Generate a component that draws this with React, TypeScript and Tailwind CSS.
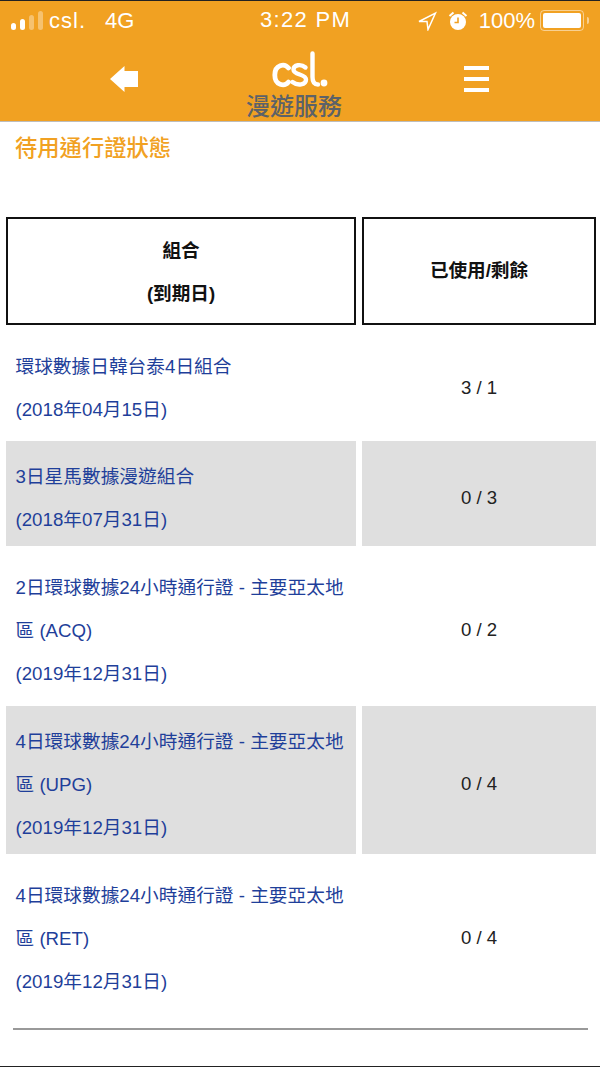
const cjk = "font-['Liberation_Sans','Noto_Sans_CJK_TC',sans-serif]";

const rows: { lines: string[]; usage: string; shaded: boolean; pad: string }[] = [
  { lines: ["環球數據日韓台泰4日組合", "(2018年04月15日)"], usage: "3 / 1", shaded: false, pad: "pb-[3.4px]" },
  { lines: ["3日星馬數據漫遊組合", "(2018年07月31日)"], usage: "0 / 3", shaded: true, pad: "pb-[4.4px]" },
  { lines: ["2日環球數據24小時通行證 - 主要亞太地", "區 (ACQ)", "(2019年12月31日)"], usage: "0 / 2", shaded: false, pad: "pb-[4.4px]" },
  { lines: ["4日環球數據24小時通行證 - 主要亞太地", "區 (UPG)", "(2019年12月31日)"], usage: "0 / 4", shaded: true, pad: "pb-[4.4px]" },
  { lines: ["4日環球數據24小時通行證 - 主要亞太地", "區 (RET)", "(2019年12月31日)"], usage: "0 / 4", shaded: false, pad: "pb-[4.4px]" },
];

function StatusBar() {
  return (
    <div className="flex h-[39px] items-center pl-[11px] pr-[11px] text-[22px] text-white">
      <div className="flex w-[249px] items-center">
        <svg width="32" height="20" viewBox="0 0 32 20" fill="#fff">
          <rect x="0" y="12" width="5" height="7" rx="2.5" />
          <rect x="9" y="8" width="5" height="11" rx="2.5" />
          <rect x="18" y="4" width="5" height="15" rx="2.5" opacity="0.35" />
          <rect x="27" y="0" width="5" height="19" rx="2.5" opacity="0.35" />
        </svg>
        <span className="ml-[6px] tracking-[1px]">csl.</span>
        <span className="ml-[19px]">4G</span>
      </div>
      <div className="-mt-[2px] font-medium tracking-[1.3px] whitespace-nowrap">3:22 PM</div>
      <div className="flex flex-1 items-center justify-end">
        <svg width="19" height="20" viewBox="0 0 19 20" fill="none" stroke="#fff" strokeWidth="1.5" strokeLinejoin="miter">
          <path d="M1 10.5 L17.5 2 L10 18.5 L9 10.5 Z" />
        </svg>
        <svg className="ml-[11px]" width="20" height="20" viewBox="0 0 19 20" fill="#fff">
          <circle cx="9.5" cy="11" r="8" />
          <path d="M9.5 6.5 V11.5 H6" stroke="#f1a122" strokeWidth="1.6" fill="none" />
          <path d="M1 5 L5 1.5 M18 5 L14 1.5" stroke="#fff" strokeWidth="2" />
        </svg>
        <span className="ml-[11px] font-light">100%</span>
        <div className="ml-[5px] flex h-[21px] w-[44px] items-center rounded-[4px] border border-white/50 p-[2px]">
          <div className="h-full w-full rounded-[2px] bg-white" />
        </div>
        <div className="ml-[3px] h-[7px] w-[2px] rounded-r-sm bg-white/50" />
      </div>
    </div>
  );
}

function Header() {
  return (
    <div className="flex h-[81px] items-start pl-[110px]">
      <svg className="mt-[26px]" width="29" height="27" viewBox="0 0 29 27" fill="#fff">
        <path d="M0 13 L14.5 0 V5 H28 V21 H14.5 V26 Z" />
      </svg>
      <div className="ml-[105px] flex w-[100px] flex-col">
        <svg className="mt-[10px] ml-[26px]" width="60" height="38" viewBox="0 0 60 38" fill="none" stroke="#fff" strokeLinecap="round">
          <path d="M18.5 18 C14.5 13 4.8 14.5 4.8 25 C4.8 35.5 14.5 37 18.5 32" strokeWidth="4.8" />
          <path d="M35.5 17.5 C31 13.5 23.5 14.8 23.5 19.5 C23.5 25.5 36 23.5 36 29.5 C36 35 27.5 36 22.5 32" strokeWidth="4.4" />
          <path d="M42.5 3.5 V27 C42.5 32.5 44.5 34.5 48 34.5" strokeWidth="4.4" />
          <circle cx="54" cy="33" r="3.4" fill="#fff" stroke="none" />
        </svg>
        <div className={`${cjk} mt-[4px] text-center text-[24px] leading-[30px] font-medium whitespace-nowrap text-[#5c6268]`}>漫遊服務</div>
      </div>
      <div className="mt-[26px] ml-[120px] flex w-[25px] flex-col gap-[7px]">
        <div className="h-[4px] bg-white" />
        <div className="h-[4px] bg-white" />
        <div className="h-[4px] bg-white" />
      </div>
    </div>
  );
}

export default function App() {
  return (
    <div className={`${cjk} relative h-[1067px] w-[600px] overflow-hidden border-t-[1px] border-b-[1px] border-[#222] bg-white`}>
      <div className="border-b-[1px] border-[#bdbdbd] bg-[#f1a122]">
        <StatusBar />
        <Header />
      </div>
      <h1 className="mt-[12px] pl-[15px] text-[22.3px] leading-[30px] font-medium text-[#f1a122]">待用通行證狀態</h1>
      <div className="pt-[47px]">
        <table className="w-[602px] table-fixed border-separate [border-spacing:6px] text-[18.7px] leading-[43.2px]">
          <colgroup>
            <col className="w-[350px]" />
            <col className="w-[234px]" />
          </colgroup>
          <thead>
            <tr className="text-[18.6px] font-bold text-[#111]">
              <th className="border-2 border-[#111] px-[9px] pt-[10px] pb-[8px] leading-[43px] font-bold">
                組合
                <br />
                (到期日)
              </th>
              <th className="border-2 border-[#111] px-[9px] pt-[8px] pb-[8px] font-bold">已使用/剩餘</th>
            </tr>
          </thead>
          <tbody>
            {rows.map((row, i) => (
              <tr key={i}>
                <td className={`pt-[14px] pr-[9.5px] pl-[9.5px] text-[#1f3f9a] ${row.pad} ${row.shaded ? "bg-[#dfdfdf]" : ""}`}>
                  {row.lines.map((l, j) => (
                    <div key={j}>{l}</div>
                  ))}
                </td>
                <td className={`pt-[9px] text-center text-[18.6px] text-[#222] ${row.shaded ? "bg-[#dfdfdf]" : ""}`}>{row.usage}</td>
              </tr>
            ))}
          </tbody>
        </table>
      </div>
      <div className="mt-[14px] mr-[12px] ml-[13px] h-[2px] bg-[#999]" />
    </div>
  );
}
